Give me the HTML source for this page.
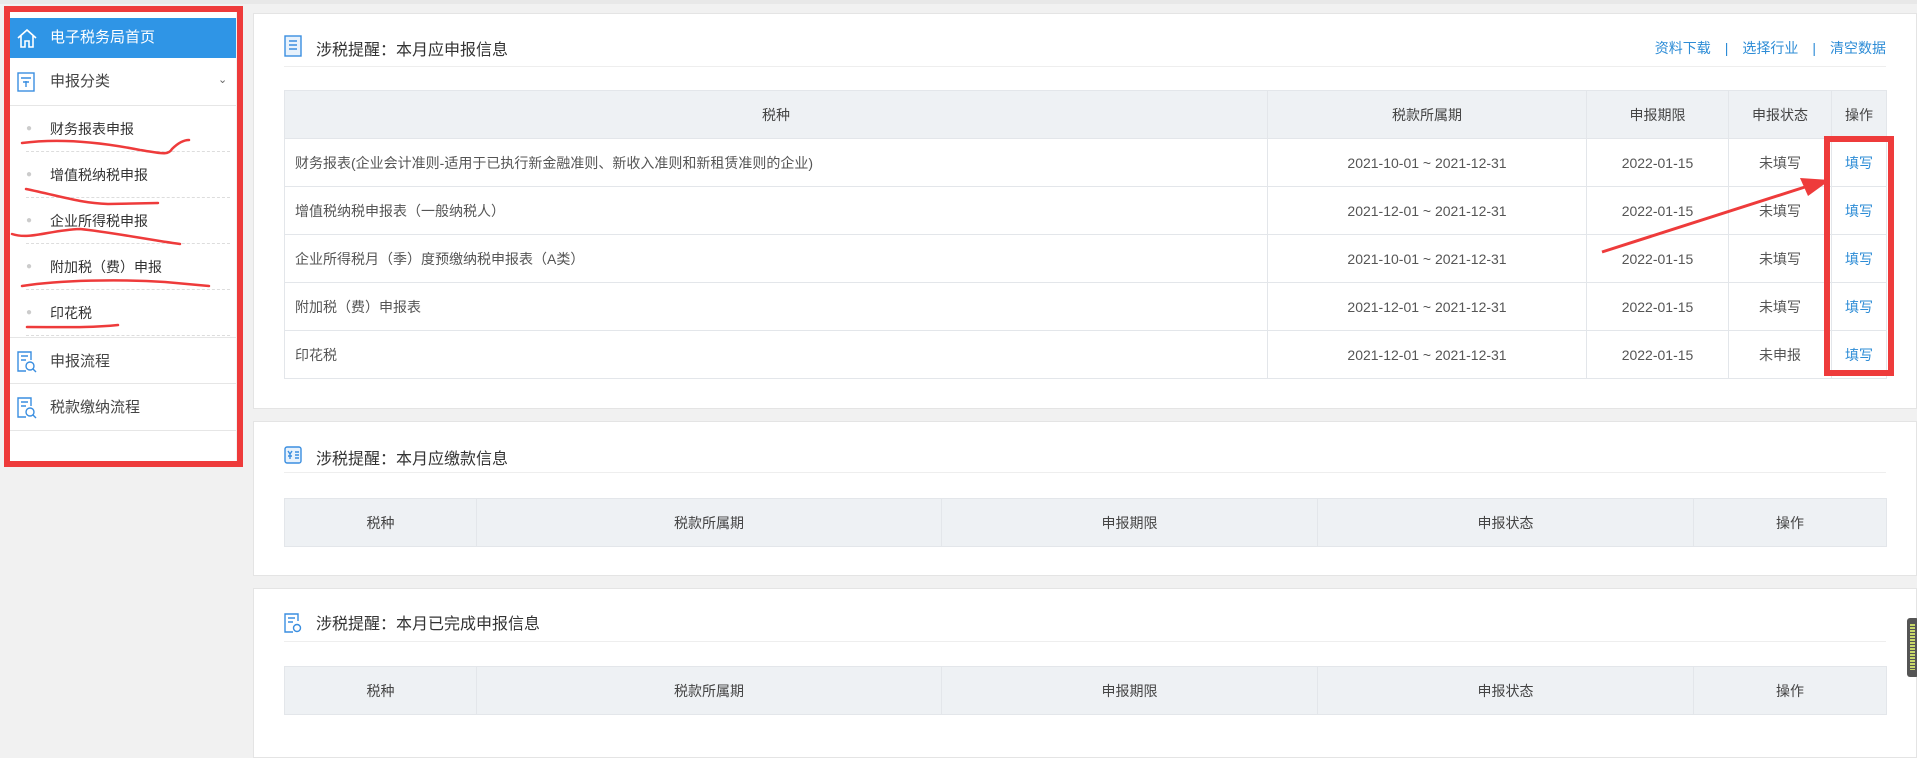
<!DOCTYPE html>
<html><head><meta charset="utf-8"><style>
*{margin:0;padding:0;box-sizing:border-box}
body{width:1917px;height:743px;overflow:hidden;background:#f1f1f1;font-family:"Liberation Sans","Noto Sans CJK SC",sans-serif;color:#333;position:relative}
.abs{position:absolute}
.side{left:10px;top:12px;width:226px;height:450px;background:#fff}
.side .it{position:absolute;left:0;width:226px;font-size:15px;color:#444;border-bottom:1px solid #e6e6e6}
.card{position:absolute;left:253px;width:1664px;background:#fff;border:1px solid #e4e4e4}
.ttl{position:absolute;left:30px;font-size:16px;color:#333}
.tline{position:absolute;left:30px;right:30px;height:1px;background:#eee}
table{position:absolute;left:30px;border-collapse:collapse;font-size:14px;color:#555;table-layout:fixed;width:1602px}
td,th{border:1px solid #e3e6ea;text-align:center;font-weight:normal;white-space:nowrap;overflow:hidden}
th{background:#eef1f4;height:48px;color:#444}
td{height:48px}
.lnk{color:#2d8cd6}
</style></head><body>
<div class="abs" style="left:0;top:0;width:1917px;height:4px;background:#e8e8e8"></div>
<div class="abs side">
  <div class="it" style="top:6px;height:40px;background:#2f95e6;color:#fff;line-height:40px;border:none">
    <svg class="abs" style="left:6px;top:9px" width="22" height="22" viewBox="0 0 22 22" fill="none" stroke="#fff" stroke-width="1.6"><path d="M2 11 L11 3 L20 11 M5 9 V20 H9 V14 H13 V20 H17 V9"/></svg>
    <span style="position:absolute;left:40px">电子税务局首页</span></div>
  <div class="it" style="top:46px;height:48px;line-height:48px">
    <svg class="abs" style="left:7px;top:14px" width="18" height="20" viewBox="0 0 18 20" fill="none" stroke="#3a8ee0" stroke-width="1.4"><rect x="1" y="1" width="16" height="18"/><path d="M4 6h10M6 10h6M9 9v6"/></svg>
    <span style="position:absolute;left:40px">申报分类</span>
    <span style="position:absolute;left:208px;top:-2px;font-size:11px;color:#666">&#8964;</span></div>
  <div style="position:absolute;left:0;top:94px;width:226px">
    <div style="position:absolute;top:0;height:46px;left:16px;width:204px;border-bottom:1px dashed #ddd;font-size:14px;line-height:46px"><span style="color:#ccc;position:absolute;left:0;font-size:10px">●</span><span style="position:absolute;left:24px">财务报表申报</span></div>
    <div style="position:absolute;top:46px;height:46px;left:16px;width:204px;border-bottom:1px dashed #ddd;font-size:14px;line-height:46px"><span style="color:#ccc;position:absolute;left:0;font-size:10px">●</span><span style="position:absolute;left:24px">增值税纳税申报</span></div>
    <div style="position:absolute;top:92px;height:46px;left:16px;width:204px;border-bottom:1px dashed #ddd;font-size:14px;line-height:46px"><span style="color:#ccc;position:absolute;left:0;font-size:10px">●</span><span style="position:absolute;left:24px">企业所得税申报</span></div>
    <div style="position:absolute;top:138px;height:46px;left:16px;width:204px;border-bottom:1px dashed #ddd;font-size:14px;line-height:46px"><span style="color:#ccc;position:absolute;left:0;font-size:10px">●</span><span style="position:absolute;left:24px">附加税（费）申报</span></div>
    <div style="position:absolute;top:184px;height:46px;left:16px;width:204px;border-bottom:1px dashed #ddd;font-size:14px;line-height:46px"><span style="color:#ccc;position:absolute;left:0;font-size:10px">●</span><span style="position:absolute;left:24px">印花税</span></div>
  </div>
  <div class="it" style="top:325px;height:47px;line-height:47px;border-top:1px solid #e6e6e6">
    <svg class="abs" style="left:7px;top:13px" width="20" height="22" viewBox="0 0 20 22" fill="none" stroke="#3a8ee0" stroke-width="1.4"><path d="M14 9V1H1v19h8"/><path d="M4 5h7M4 9h5"/><circle cx="13" cy="15" r="4"/><path d="M16 18l3 3"/></svg>
    <span style="position:absolute;left:40px">申报流程</span></div>
  <div class="it" style="top:372px;height:47px;line-height:47px">
    <svg class="abs" style="left:7px;top:13px" width="20" height="22" viewBox="0 0 20 22" fill="none" stroke="#3a8ee0" stroke-width="1.4"><path d="M14 9V1H1v19h8"/><path d="M4 5h7M4 9h5"/><circle cx="13" cy="15" r="4"/><path d="M16 18l3 3"/></svg>
    <span style="position:absolute;left:40px">税款缴纳流程</span></div>
</div>

<div class="card" style="top:13px;height:396px">
  <svg class="abs" style="left:30px;top:21px" width="18" height="22" viewBox="0 0 18 22" fill="none" stroke="#3a8ee0" stroke-width="1.4"><rect x="1" y="1" width="16" height="20" fill="#e8f2fc"/><path d="M5 6h8M5 10h8M5 14h8"/></svg>
  <div class="ttl" style="top:22px;left:62px">涉税提醒：本月应申报信息</div>
  <div class="abs" style="right:30px;top:24px;font-size:14px" ><span class="lnk">资料下载</span><span class="lnk" style="margin:0 14px">|</span><span class="lnk">选择行业</span><span class="lnk" style="margin:0 14px">|</span><span class="lnk">清空数据</span></div>
  <div class="tline" style="top:52px"></div>
  <table style="top:76px">
    <colgroup><col style="width:983px"><col style="width:319px"><col style="width:142px"><col style="width:103px"><col style="width:55px"></colgroup>
    <tr><th>税种</th><th>税款所属期</th><th>申报期限</th><th>申报状态</th><th>操作</th></tr>
    <tr><td style="text-align:left;padding-left:10px">财务报表(企业会计准则-适用于已执行新金融准则、新收入准则和新租赁准则的企业)</td><td>2021-10-01 ~ 2021-12-31</td><td>2022-01-15</td><td>未填写</td><td class="lnk">填写</td></tr>
    <tr><td style="text-align:left;padding-left:10px">增值税纳税申报表（一般纳税人）</td><td>2021-12-01 ~ 2021-12-31</td><td>2022-01-15</td><td>未填写</td><td class="lnk">填写</td></tr>
    <tr><td style="text-align:left;padding-left:10px">企业所得税月（季）度预缴纳税申报表（A类）</td><td>2021-10-01 ~ 2021-12-31</td><td>2022-01-15</td><td>未填写</td><td class="lnk">填写</td></tr>
    <tr><td style="text-align:left;padding-left:10px">附加税（费）申报表</td><td>2021-12-01 ~ 2021-12-31</td><td>2022-01-15</td><td>未填写</td><td class="lnk">填写</td></tr>
    <tr><td style="text-align:left;padding-left:10px">印花税</td><td>2021-12-01 ~ 2021-12-31</td><td>2022-01-15</td><td>未申报</td><td class="lnk">填写</td></tr>
  </table>
</div>

<div class="card" style="top:421px;height:155px">
  <svg class="abs" style="left:30px;top:24px" width="18" height="18" viewBox="0 0 18 18" fill="none" stroke="#3a8ee0" stroke-width="1.4"><rect x="1" y="1" width="16" height="16" rx="2" fill="#e8f2fc"/><path d="M4 5l2 3 2-3M6 8v5M4 10h4M11 6h4M11 9h4M11 12h4"/></svg>
  <div class="ttl" style="top:23px;left:62px">涉税提醒：本月应缴款信息</div>
  <div class="tline" style="top:50px"></div>
  <table style="top:76px">
    <colgroup><col style="width:192px"><col style="width:465px"><col style="width:376px"><col style="width:376px"><col style="width:193px"></colgroup>
    <tr><th>税种</th><th>税款所属期</th><th>申报期限</th><th>申报状态</th><th>操作</th></tr>
  </table>
</div>

<div class="card" style="top:588px;height:170px">
  <svg class="abs" style="left:30px;top:24px" width="18" height="20" viewBox="0 0 18 20" fill="none" stroke="#3a8ee0" stroke-width="1.4"><path d="M14 8V1H1v18h8"/><path d="M4 5h7M4 9h5"/><circle cx="13" cy="15" r="3.5"/></svg>
  <div class="ttl" style="top:21px;left:62px">涉税提醒：本月已完成申报信息</div>
  <div class="tline" style="top:52px"></div>
  <table style="top:77px">
    <colgroup><col style="width:192px"><col style="width:465px"><col style="width:376px"><col style="width:376px"><col style="width:193px"></colgroup>
    <tr><th>税种</th><th>税款所属期</th><th>申报期限</th><th>申报状态</th><th>操作</th></tr>
  </table>
</div>

<div class="abs" style="left:1907px;top:618px;width:12px;height:59px;background:#555;border-radius:3px"><div style="margin:6px 3px;height:46px;width:5px;background:repeating-linear-gradient(#c8d86a 0 2px,transparent 2px 3px)"></div></div>

<svg class="abs" style="left:0;top:0" width="1917" height="743" fill="none" stroke="#ee3b3b">
  <rect x="7" y="9" width="233" height="455" stroke-width="6"/>
  <rect x="1827" y="139" width="64" height="234" stroke-width="6"/>
  <g stroke-width="2.5" stroke-linecap="round">
  <path d="M22 143 C60 138 100 142 140 150 C160 153 168 156 172 149 C178 143 184 140 189 140"/>
  <path d="M26 189 C60 196 80 203 108 204 L158 203"/>
  <path d="M12 234 C30 240 50 230 80 229 C110 232 150 240 180 244"/>
  <path d="M22 286 C60 280 120 279 165 282 L209 286"/>
  <path d="M27 327 C60 327 90 328 118 325"/>
  </g>
  <path d="M1602 252 L1805 187" stroke-width="3"/>
  <polygon points="1830,180 1800,178 1808,196" fill="#ee3b3b" stroke="none"/>
</svg>
</body></html>
